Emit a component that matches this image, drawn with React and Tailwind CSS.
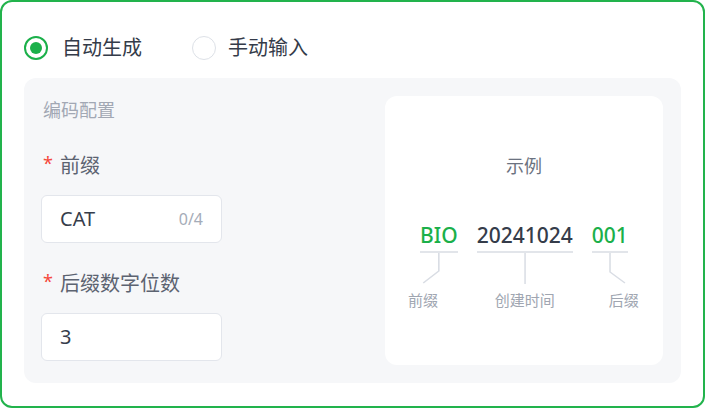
import React from 'react';

const font = { fontFamily: '"Noto Sans", "Noto Sans CJK SC", sans-serif' };

const Radio = ({ checked, label }) => (
  <div className="flex items-center">
    {checked ? (
      <span className="w-6 h-6 rounded-full border-2 border-[#1bb04a] flex items-center justify-center">
        <span className="w-3 h-3 rounded-full bg-[#1bb04a]" />
      </span>
    ) : (
      <span className="w-6 h-6 rounded-full border-[1.5px] border-[#dde1e7] bg-white" />
    )}
    <span className={`${checked ? 'ml-[14px]' : 'ml-[12px]'} text-[20px] leading-[28px] text-[#343b49]`}>{label}</span>
  </div>
);

const Field = ({ label, value, count }) => (
  <div className="flex flex-col">
    <div className="flex items-start ml-[2px] text-[20px] leading-[28px] text-[#5c6371]">
      <span className="text-[#f5483b] text-[18px] leading-[22px] mr-[7px]">*</span>
      <span>{label}</span>
    </div>
    <div className="mt-[15px] w-[181px] h-[48px] bg-white border-[1.5px] border-[#e3e6ec] rounded-[6px] flex items-center justify-between pl-[18px] pr-[18px]">
      <span className="text-[20px] text-[#363d4b]">{value}</span>
      {count && <span className="text-[16px] text-[#a5acb8]">{count}</span>}
    </div>
  </div>
);

const Part = ({ text, green, label, kind }) => (
  <div className="flex flex-col items-center">
    <span className={`text-[21px] leading-[28px] font-medium ${green ? 'text-[#1bb04a]' : 'text-[#353c4a]'}`}>{text}</span>
    <span className="mt-[2px] h-[2px] self-stretch bg-[#e2e5ea]" />
    <svg className="self-stretch" height="31" viewBox={`0 0 ${kind === 'mid' ? 96 : 35} 31`} preserveAspectRatio="none">
      {kind === 'left' && <path d="M17.5 0 V18 L3 30" stroke="#d9dde4" strokeWidth="1.5" fill="none" />}
      {kind === 'mid' && <path d="M48 0 V31" stroke="#d9dde4" strokeWidth="1.5" fill="none" />}
      {kind === 'right' && <path d="M17.5 0 V19 L32 30" stroke="#d9dde4" strokeWidth="1.5" fill="none" />}
    </svg>
    <span
      className={`mt-[6px] text-[15px] leading-[20px] text-[#a0a6b1] whitespace-nowrap ${
        kind === 'left' ? '-translate-x-[16px]' : kind === 'right' ? 'translate-x-[14px]' : ''
      }`}
    >
      {label}
    </span>
  </div>
);

export default function App() {
  return (
    <div style={font} className="w-[705px] h-[408px] bg-white">
      <div className="w-[705px] h-[408px] border-2 border-[#22b34c] rounded-[12px] px-[22px] pt-[34px] pb-[23px] flex flex-col">
        <div className="flex items-center h-6">
          <Radio checked label="自动生成" />
          <div className="ml-[50px]">
            <Radio label="手动输入" />
          </div>
        </div>

        <div className="mt-[18px] flex-1 bg-[#f6f7f9] rounded-[12px] flex justify-between pl-[17px] pr-[18px] py-[18px]">
          <div className="flex flex-col">
            <div className="mt-[1px] ml-[2px] text-[18px] leading-[26px] text-[#a2a8b4]">编码配置</div>
            <div className="mt-[29px]">
              <Field label="前缀" value="CAT" count="0/4" />
            </div>
            <div className="mt-[27px]">
              <Field label="后缀数字位数" value="3" />
            </div>
          </div>

          <div className="w-[278px] h-[269px] bg-white rounded-[12px] flex flex-col items-center pt-[57px]">
            <div className="text-[18px] leading-[26px] text-[#6b7280]">示例</div>
            <div className="mt-[42px] flex items-start gap-[19px]">
              <Part text="BIO" green label="前缀" kind="left" />
              <Part text="20241024" label="创建时间" kind="mid" />
              <Part text="001" green label="后缀" kind="right" />
            </div>
          </div>
        </div>
      </div>
    </div>
  );
}
